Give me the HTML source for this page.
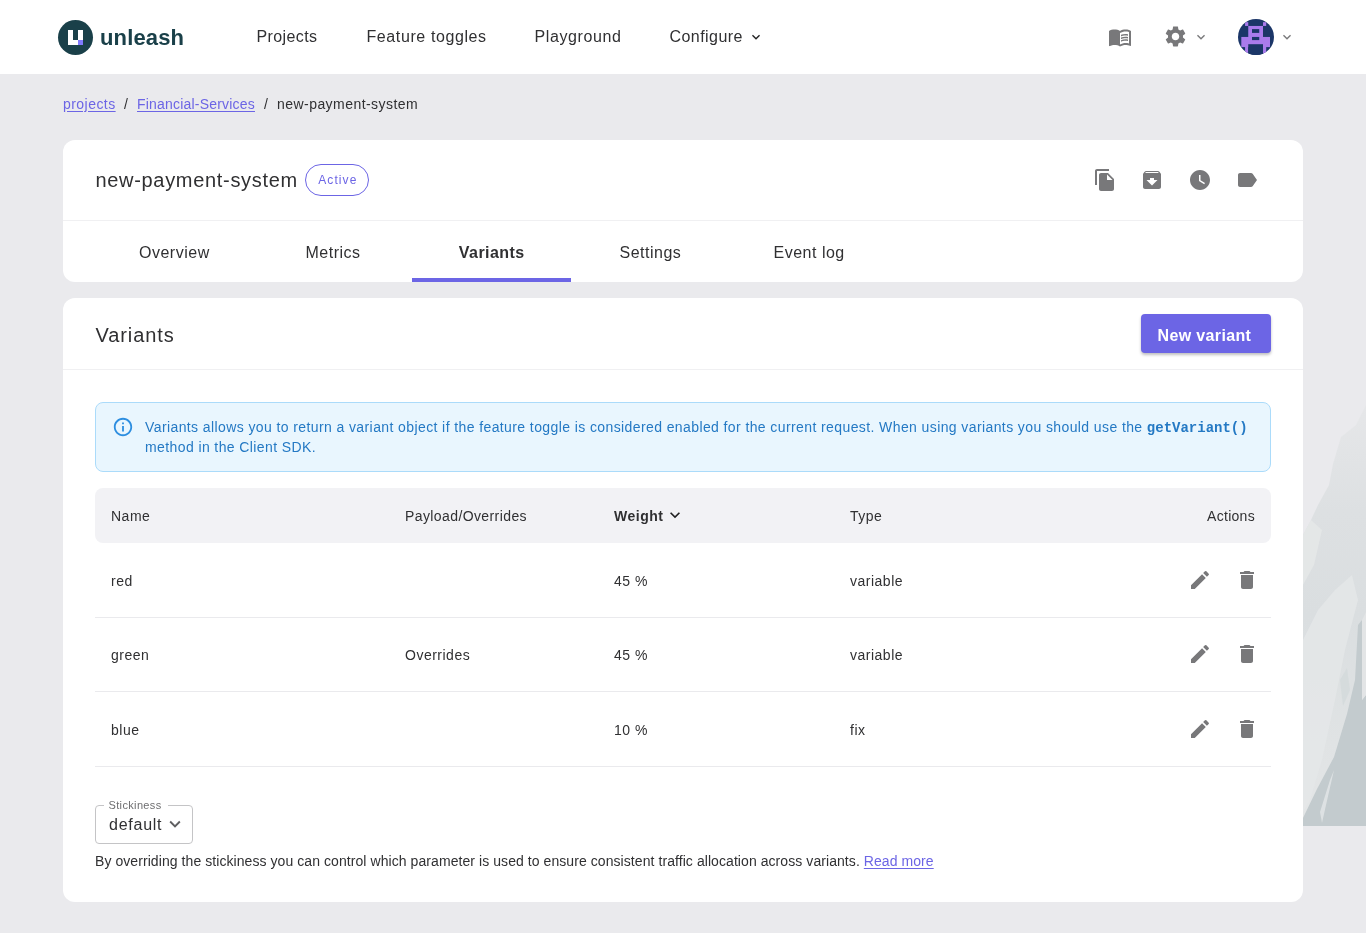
<!DOCTYPE html>
<html><head><meta charset="utf-8">
<style>
*{box-sizing:border-box;margin:0;padding:0}
html,body{width:1366px;height:933px;overflow:hidden}
body>*{will-change:transform}
body{background:#eaeaed;font-family:"Liberation Sans",sans-serif;color:#303032;position:relative}
.abs{position:absolute}
.t{position:absolute;white-space:nowrap;line-height:1}
svg{display:block}
.nav{font-size:16px;color:#303032}
.card{position:absolute;background:#fff;border-radius:12px}
.icon{position:absolute;fill:#78787a}
.bc{font-size:14px;letter-spacing:0.45px}
.lnk{color:#6c65e5;text-decoration:underline;text-underline-offset:1.5px}
.tab{position:absolute;top:104px;width:158.7px;text-align:center;font-size:16px;letter-spacing:0.5px}
.tb{font-size:14px;letter-spacing:0.5px}
</style></head>
<body>
<!-- background artwork (right edge) -->
<svg class="abs" style="left:1303px;top:400px" width="63" height="430" viewBox="1303 400 63 430">
  <defs>
    <linearGradient id="lg1" x1="0" y1="0" x2="0" y2="1">
      <stop offset="0" stop-color="#e6e7e9"/>
      <stop offset="0.25" stop-color="#dde0e2"/>
      <stop offset="0.5" stop-color="#dadee0"/>
      <stop offset="0.8" stop-color="#e0e3e4"/>
      <stop offset="1" stop-color="#e4e6e7"/>
    </linearGradient>
  </defs>
  <path fill="url(#lg1)" d="M1366 405 L1356 425 L1341 437 L1333 464 L1329 485 L1318 505 L1311 520 L1303 535 L1303 826 L1366 826 Z"/>
  <path fill="#e6e8e9" opacity="0.8" d="M1303 535 L1311 520 L1322 530 L1314 565 L1303 585 Z"/>
  <path fill="#e5e7e8" opacity="0.8" d="M1303 640 L1318 610 L1335 590 L1352 575 L1358 600 L1345 650 L1335 700 L1322 760 L1310 800 L1303 812 Z"/>
  <path fill="#d2d8da" opacity="0.7" d="M1340 680 L1347 668 L1350 690 L1343 706 Z"/>
  <path fill="#c3cbce" d="M1358 625 L1362 620 L1362 700 L1366 695 L1366 826 L1303 826 L1303 818 L1317 789 L1334 757 L1347 714 L1355 680 Z"/>
  <path fill="#e3e6e7" opacity="0.9" d="M1362 620 L1366 612 L1366 695 L1362 700 Z"/>
  <path fill="#e2e5e6" opacity="0.85" d="M1330 780 L1334 770 L1326 805 L1322 823 L1320 812 Z"/>
</svg>

<div class="abs" style="left:0;top:0;width:1366px;height:74px;background:#fff">
  <!-- logo -->
  <div class="abs" style="left:58px;top:20px;width:35px;height:35px;border-radius:50%;background:#1a4049"></div>
  <div class="abs" style="left:68px;top:30px;width:5px;height:15px;background:#fff"></div>
  <div class="abs" style="left:68px;top:40px;width:15px;height:5px;background:#fff"></div>
  <div class="abs" style="left:78px;top:30px;width:5px;height:10px;background:#fff"></div>
  <div class="abs" style="left:78px;top:40px;width:5px;height:5px;background:#817afe"></div>
  <div class="t" style="left:100px;top:26.8px;font-size:22px;font-weight:bold;color:#1a4049;letter-spacing:0.15px">unleash</div>

  <div class="t nav" style="left:256.5px;top:28.5px;letter-spacing:0.4px">Projects</div>
  <div class="t nav" style="left:366.5px;top:28.5px;letter-spacing:0.6px">Feature toggles</div>
  <div class="t nav" style="left:534.5px;top:28.5px;letter-spacing:0.6px">Playground</div>
  <div class="t nav" style="left:669.5px;top:28.5px;letter-spacing:0.45px">Configure</div>
  <svg class="icon" style="left:748px;top:29px;fill:#202021" width="16" height="16" viewBox="0 0 24 24"><path d="M16.59 8.59 12 13.17 7.41 8.59 6 10l6 6 6-6z"/></svg>

  <svg class="icon" style="left:1108px;top:25px" width="24" height="24" viewBox="0 0 24 24"><path d="M21 5c-1.11-.35-2.330-.5-3.5-.5-1.95 0-4.05.4-5.5 1.5-1.45-1.1-3.55-1.5-5.5-1.5S2.45 4.9 1 6v14.65c0 .25.25.5.5.5.1 0 .15-.05.25-.05C3.1 20.45 5.05 20 6.5 20c1.95 0 4.05.4 5.5 1.5 1.35-.85 3.8-1.5 5.5-1.5 1.65 0 3.35.3 4.75 1.050.1.05.15.05.25.05.25 0 .5-.25.5-.5V6c-.6-.45-1.25-.75-2-1zm0 13.5c-1.1-.35-2.3-.5-3.5-.5-1.7 0-4.15.65-5.5 1.5V8c1.35-.85 3.8-1.5 5.5-1.5 1.2 0 2.4.15 3.5.5v11.5z"/><path d="M17.5 10.5c.88 0 1.73.09 2.5.26V9.24c-.79-.15-1.64-.24-2.5-.24-1.7 0-3.24.29-4.5.83v1.66c1.130-.64 2.7-.99 4.5-.99zM13 12.49v1.66c1.13-.64 2.7-.99 4.5-.99.88 0 1.73.09 2.5.26V11.9c-.79-.15-1.64-.24-2.5-.24-1.7 0-3.24.3-4.5.83zm4.5 1.84c-1.7 0-3.24.29-4.5.83v1.66c1.13-.64 2.7-.99 4.5-.99.88 0 1.73.09 2.5.26v-1.52c-.79-.16-1.64-.24-2.5-.24z"/></svg>
  <svg class="icon" style="left:1163.4px;top:24.4px" width="25" height="25" viewBox="0 0 24 24"><path d="M19.14 12.94c.04-.3.06-.61.06-.94 0-.32-.02-.64-.07-.94l2.03-1.58c.18-.14.23-.41.12-.61l-1.92-3.32c-.12-.22-.37-.29-.59-.22l-2.39.96c-.5-.38-1.03-.7-1.62-.94l-.36-2.54c-.04-.24-.24-.41-.48-.41h-3.84c-.24 0-.43.17-.47.41l-.36 2.54c-.59.24-1.13.57-1.62.94l-2.39-.96c-.22-.08-.47 0-.59.22L2.740 8.87c-.12.21-.08.47.12.61l2.03 1.58c-.05.3-.09.63-.09.94s.02.64.07.94l-2.03 1.58c-.18.14-.23.41-.12.61l1.92 3.32c.12.22.37.29.59.22l2.39-.96c.5.38 1.03.7 1.62.94l.36 2.54c.05.24.24.41.48.41h3.84c.24 0 .44-.17.47-.41l.36-2.54c.59-.24 1.13-.56 1.62-.94l2.39.96c.22.08.47 0 .59-.22l1.92-3.32c.12-.22.07-.47-.12-.61l-2.01-1.58zM12 15.6c-1.98 0-3.6-1.62-3.6-3.6s1.62-3.6 3.6-3.6 3.6 1.62 3.6 3.6-1.62 3.6-3.6 3.6z"/></svg>
  <svg class="icon" style="left:1193px;top:29px" width="16" height="16" viewBox="0 0 24 24"><path d="M16.59 8.59 12 13.17 7.41 8.59 6 10l6 6 6-6z"/></svg>
  <svg class="abs" style="left:1238px;top:19px;border-radius:50%" width="36" height="36" viewBox="0 0 36 36"><rect width="36" height="36" fill="#1b3668"/>
    <g fill="#a97bec">
    <rect x="7.06" y="3.18" width="3.19" height="3.77"/><rect x="25" y="3.18" width="3.2" height="3.77"/>
    <rect x="10.25" y="6.95" width="14.75" height="18.25"/>
    <rect x="3.3" y="17.95" width="28.7" height="10.15"/>
    <rect x="7.06" y="25" width="3.19" height="11"/><rect x="25" y="25" width="3.2" height="11"/>
    </g>
    <g fill="#1b3668"><rect x="14" y="10.1" width="7.25" height="3.8"/><rect x="14" y="17.95" width="7.25" height="3.15"/><rect x="10.25" y="25.2" width="14.75" height="11"/></g>
  </svg>
  <svg class="icon" style="left:1279px;top:29px" width="16" height="16" viewBox="0 0 24 24"><path d="M16.59 8.59 12 13.17 7.41 8.59 6 10l6 6 6-6z"/></svg>
</div>

<!-- breadcrumbs -->
<div class="t bc lnk" style="left:63px;top:97px">projects</div>
<div class="t bc" style="left:124px;top:97px">/</div>
<div class="t bc lnk" style="left:137px;top:97px;letter-spacing:0.2px">Financial-Services</div>
<div class="t bc" style="left:264px;top:97px">/</div>
<div class="t bc" style="left:276.5px;top:97px">new-payment-system</div>

<!-- card 1 -->
<div class="card" style="left:63px;top:140px;width:1240px;height:142px;overflow:hidden">
  <div class="t" style="left:32.5px;top:29.6px;font-size:20px;letter-spacing:0.68px">new-payment-system</div>
  <div class="abs" style="left:242px;top:24px;width:64px;height:32px;border:1px solid #6c65e5;border-radius:16px"></div>
  <div class="t" style="left:255.2px;top:34.4px;font-size:12px;color:#6c65e5;letter-spacing:1.1px">Active</div>

  <svg class="icon" style="left:1029.6px;top:28px" width="24" height="24" viewBox="0 0 24 24"><path d="M16 1H4c-1.1 0-2 .9-2 2v14h2V3h12V1zm-1 4 6 6v10c0 1.1-.9 2-2 2H7.99C6.89 23 6 22.1 6 21l.01-14c0-1.1.89-2 1.99-2h7zm-1 7h5.5L14 6.5V12z"/></svg>
  <svg class="icon" style="left:1077px;top:28px" width="24" height="24" viewBox="0 0 24 24"><path d="M20.54 5.23l-1.39-1.68C18.88 3.21 18.47 3 18 3H6c-.47 0-.88.21-1.16.55L3.46 5.23C3.17 5.57 3 6.02 3 6.5V19c0 1.1.9 2 2 2h14c1.1 0 2-.9 2-2V6.5c0-.48-.17-.93-.46-1.27zM12 17.5 6.5 12H10v-2h4v2h3.5L12 17.5zM5.12 5l.81-1h12l.94 1H5.12z"/></svg>
  <svg class="icon" style="left:1125px;top:28px" width="24" height="24" viewBox="0 0 24 24"><path d="M12 2C6.5 2 2 6.5 2 12s4.5 10 10 10 10-4.5 10-10S17.5 2 12 2zm4.2 14.2L11 13V7h1.5v5.2l4.5 2.7-.8 1.3z"/></svg>
  <svg class="icon" style="left:1172px;top:28px" width="24" height="24" viewBox="0 0 24 24"><path d="M17.63 5.84C17.27 5.33 16.67 5 16 5L5 5.01C3.9 5.01 3 5.9 3 7v10c0 1.1.9 1.99 2 1.99L16 19c.67 0 1.27-.33 1.63-.84L22 12l-4.37-6.16z"/></svg>

  <div class="abs" style="left:0;top:80px;width:1240px;height:1px;background:#f0f0f2"></div>
  <div class="tab" style="left:32px">Overview</div>
  <div class="tab" style="left:190.7px">Metrics</div>
  <div class="tab" style="left:349.4px;font-weight:bold;letter-spacing:0.45px">Variants</div>
  <div class="tab" style="left:508.1px">Settings</div>
  <div class="tab" style="left:666.8px">Event log</div>
  <div class="abs" style="left:349.3px;top:138px;width:158.8px;height:4px;background:#6c65e5"></div>
</div>

<!-- card 2 -->
<div class="card" style="left:63px;top:298px;width:1240px;height:604px;overflow:hidden">
  <div class="t" style="left:32.5px;top:26.6px;font-size:20px;letter-spacing:0.9px">Variants</div>
  <div class="abs" style="left:1078px;top:16px;width:130px;height:39px;background:#6c65e5;border-radius:4px;box-shadow:0 2px 3px rgba(0,0,0,.25)"></div>
  <div class="t" style="left:1094.6px;top:29.6px;font-size:16px;font-weight:bold;color:#fff;letter-spacing:0.35px">New variant</div>
  <div class="abs" style="left:0;top:71px;width:1240px;height:1px;background:#f0f0f2"></div>

  <!-- alert -->
  <div class="abs" style="left:32px;top:104px;width:1176px;height:70px;background:#e9f6fe;border:1px solid #abdbfa;border-radius:8px"></div>
  <svg class="abs" style="left:48.5px;top:118px" width="22" height="22" viewBox="0 0 24 24"><path fill="#2d8ee0" d="M11 7h2v2h-2zm0 4h2v6h-2zm1-9C6.48 2 2 6.480 2 12s4.48 10 10 10 10-4.48 10-10S17.52 2 12 2zm0 18c-4.41 0-8-3.59-8-8s3.59-8 8-8 8 3.59 8 8-3.59 8-8 8z"/></svg>
  <div class="t" style="left:82px;top:121.5px;font-size:14px;color:#2479c4;letter-spacing:0.4px">Variants allows you to return a variant object if the feature toggle is considered enabled for the current request. When using variants you should use the <b style="font-family:'Liberation Mono',monospace;letter-spacing:0">getVariant()</b></div>
  <div class="t" style="left:82px;top:141.5px;font-size:14px;color:#2479c4;letter-spacing:0.4px">method in the Client SDK.</div>

  <!-- table header -->
  <div class="abs" style="left:32px;top:190px;width:1176px;height:55px;background:#f2f2f5;border-radius:8px"></div>
  <div class="t tb" style="left:48px;top:210.5px">Name</div>
  <div class="t tb" style="left:342px;top:210.5px;letter-spacing:0.4px">Payload/Overrides</div>
  <div class="t tb" style="left:551px;top:210.5px;font-weight:bold">Weight</div>
  <svg class="abs" style="left:601.6px;top:207.25px" width="20" height="20" viewBox="0 0 24 24"><path fill="#202021" d="M16.59 8.59 12 13.17 7.41 8.59 6 10l6 6 6-6z"/></svg>
  <div class="t tb" style="left:787px;top:210.5px">Type</div>
  <div class="t tb" style="left:1144px;top:210.5px;width:48px;text-align:right;letter-spacing:0.3px">Actions</div>

  <!-- rows -->
  <div class="t tb" style="left:48px;top:275.5px">red</div>
  <div class="t tb" style="left:551px;top:275.5px">45 %</div>
  <div class="t tb" style="left:787px;top:275.5px">variable</div>
  <div class="abs" style="left:32px;top:319px;width:1176px;height:1px;background:#eaeaed"></div>

  <div class="t tb" style="left:48px;top:349.5px">green</div>
  <div class="t tb" style="left:342px;top:349.5px">Overrides</div>
  <div class="t tb" style="left:551px;top:349.5px">45 %</div>
  <div class="t tb" style="left:787px;top:349.5px">variable</div>
  <div class="abs" style="left:32px;top:393px;width:1176px;height:1px;background:#eaeaed"></div>

  <div class="t tb" style="left:48px;top:424.5px">blue</div>
  <div class="t tb" style="left:551px;top:424.5px">10 %</div>
  <div class="t tb" style="left:787px;top:424.5px">fix</div>
  <div class="abs" style="left:32px;top:468px;width:1176px;height:1px;background:#eaeaed"></div>

  <svg class="icon" style="left:1125px;top:270px" width="24" height="24" viewBox="0 0 24 24"><path d="M3 17.25V21h3.75L17.81 9.94l-3.75-3.75L3 17.25zM20.71 7.04c.39-.39.39-1.02 0-1.41l-2.34-2.34a.9959.9959 0 0 0-1.41 0l-1.83 1.83 3.75 3.75 1.83-1.83z"/></svg>
  <svg class="icon" style="left:1172px;top:270px" width="24" height="24" viewBox="0 0 24 24"><path d="M6 19c0 1.1.9 2 2 2h8c1.1 0 2-.9 2-2V7H6v12zM19 4h-3.5l-1-1h-5l-1 1H5v2h14V4z"/></svg>
  <svg class="icon" style="left:1125px;top:344px" width="24" height="24" viewBox="0 0 24 24"><path d="M3 17.25V21h3.75L17.81 9.94l-3.75-3.75L3 17.25zM20.71 7.04c.39-.39.39-1.02 0-1.41l-2.34-2.34a.9959.9959 0 0 0-1.41 0l-1.83 1.83 3.75 3.75 1.83-1.83z"/></svg>
  <svg class="icon" style="left:1172px;top:344px" width="24" height="24" viewBox="0 0 24 24"><path d="M6 19c0 1.1.9 2 2 2h8c1.1 0 2-.9 2-2V7H6v12zM19 4h-3.5l-1-1h-5l-1 1H5v2h14V4z"/></svg>
  <svg class="icon" style="left:1125px;top:419px" width="24" height="24" viewBox="0 0 24 24"><path d="M3 17.25V21h3.75L17.81 9.94l-3.75-3.75L3 17.25zM20.71 7.04c.39-.39.39-1.02 0-1.41l-2.34-2.34a.9959.9959 0 0 0-1.41 0l-1.83 1.83 3.75 3.75 1.83-1.83z"/></svg>
  <svg class="icon" style="left:1172px;top:419px" width="24" height="24" viewBox="0 0 24 24"><path d="M6 19c0 1.1.9 2 2 2h8c1.1 0 2-.9 2-2V7H6v12zM19 4h-3.5l-1-1h-5l-1 1H5v2h14V4z"/></svg>
  

  <!-- stickiness -->
  <div class="abs" style="left:32px;top:507px;width:98px;height:39px;border:1px solid #c4c4c6;border-radius:4px"></div>
  <div class="abs" style="left:41px;top:500px;width:64px;height:10px;background:#fff"></div>
  <div class="t" style="left:45.5px;top:501.6px;font-size:11px;color:#6e6e70;letter-spacing:0.35px">Stickiness</div>
  <div class="t" style="left:46px;top:518.5px;font-size:16px;letter-spacing:0.75px">default</div>
  <svg class="abs" style="left:100.7px;top:515.4px" width="22" height="22" viewBox="0 0 24 24"><path fill="#606062" d="M16.59 8.59 12 13.17 7.41 8.59 6 10l6 6 6-6z"/></svg>
  <div class="t" style="left:32px;top:555.7px;font-size:14px;color:#303032;letter-spacing:0.07px">By overriding the stickiness you can control which parameter is used to ensure consistent traffic allocation across variants. <span class="lnk">Read more</span></div>
</div>
</body></html>
